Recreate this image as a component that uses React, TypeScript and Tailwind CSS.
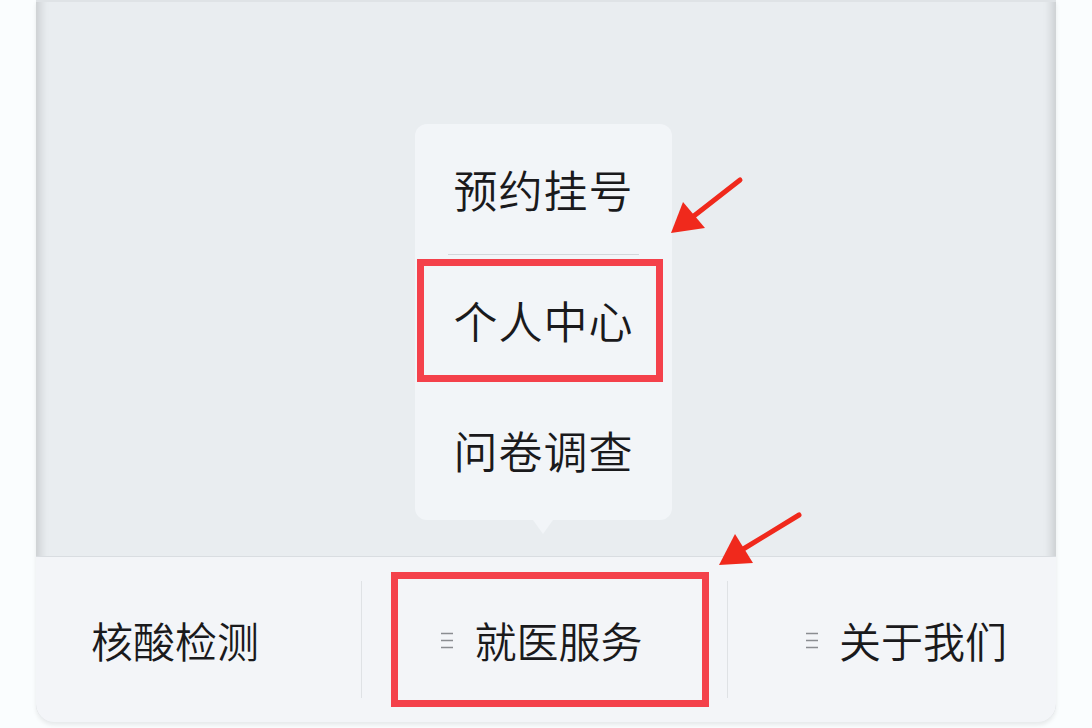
const font = { fontFamily: '"Noto Sans CJK SC", "Noto Sans", sans-serif' };

function MenuIcon() {
  return (
    <svg width="14" height="17" viewBox="0 0 14 17" className="mr-[20px] mt-[2px]">
      <path d="M1 1.5h12M1 8.5h12M1 15.5h12" stroke="#8a8d91" strokeWidth="1.6" />
    </svg>
  );
}

function Arrows() {
  return (
    <svg width="1092" height="728" className="absolute left-0 top-0 pointer-events-none">
      <line x1="740" y1="180" x2="690" y2="219" stroke="#f0291c" strokeWidth="5" strokeLinecap="round" />
      <polygon points="671,233 683,202 705,228" fill="#f0291c" />
      <line x1="799" y1="515" x2="740" y2="551" stroke="#f0291c" strokeWidth="5" strokeLinecap="round" />
      <polygon points="719,565 735,534 753,563" fill="#f0291c" />
    </svg>
  );
}

export default function App() {
  const items = ["预约挂号", "个人中心", "问卷调查"];

  return (
    <div className="relative w-[1092px] h-[728px] overflow-hidden bg-[#fafdfe] flex px-[36px] font-[350]" style={font}>
      <div className="relative flex-1 h-[722px] flex flex-col bg-[#e9edf0] border-t-2 border-[#dfe3e6] rounded-b-[18px] shadow-[inset_14px_0_10px_-10px_rgba(0,0,0,0.14),inset_-14px_0_10px_-10px_rgba(0,0,0,0.14),0_3px_4px_rgba(0,0,0,0.08)] overflow-hidden">
        <div className="relative flex-1">
          <div className="absolute left-[379px] top-[122px] w-[257px] h-[396px] rounded-[12px] bg-[#f2f5f8] flex flex-col">
            {items.map((t, i) => (
              <div key={t} className="flex flex-col">
                <div className="h-[130px] flex items-center justify-center text-[44px] text-[#1a1a1c] tracking-[1px]">
                  {t}
                </div>
                {i === 0 && <div className="h-px mx-[33px] bg-[#d3d7db]" />}
              </div>
            ))}
            <div className="absolute left-[118px] -bottom-[14px] w-0 h-0 border-l-[10px] border-r-[10px] border-t-[14px] border-l-transparent border-r-transparent border-t-[#f2f5f8]" />
          </div>
        </div>
        <div className="h-[166px] flex bg-[#f3f5f8] border-t border-[#d9dde1]">
          <div className="w-[325px] flex items-center pl-[55px] text-[42px] text-[#1a1a1c]">
            核酸检测
          </div>
          <div className="w-px my-[24px] bg-[#dfe2e5]" />
          <div className="w-[365px] flex items-center justify-center text-[42px] text-[#1a1a1c] pr-[6px]">
            <MenuIcon />
            就医服务
          </div>
          <div className="w-px my-[24px] bg-[#dfe2e5]" />
          <div className="flex-1 flex items-center pl-[77px] text-[42px] text-[#1a1a1c]">
            <MenuIcon />
            关于我们
          </div>
        </div>
      </div>

      <div className="absolute left-[417px] top-[259px] w-[246px] h-[123px] border-[7px] border-[#f4414b]" />
      <div className="absolute left-[391px] top-[572px] w-[318px] h-[135px] border-[7px] border-[#f4414b]" />
      <Arrows />
    </div>
  );
}
